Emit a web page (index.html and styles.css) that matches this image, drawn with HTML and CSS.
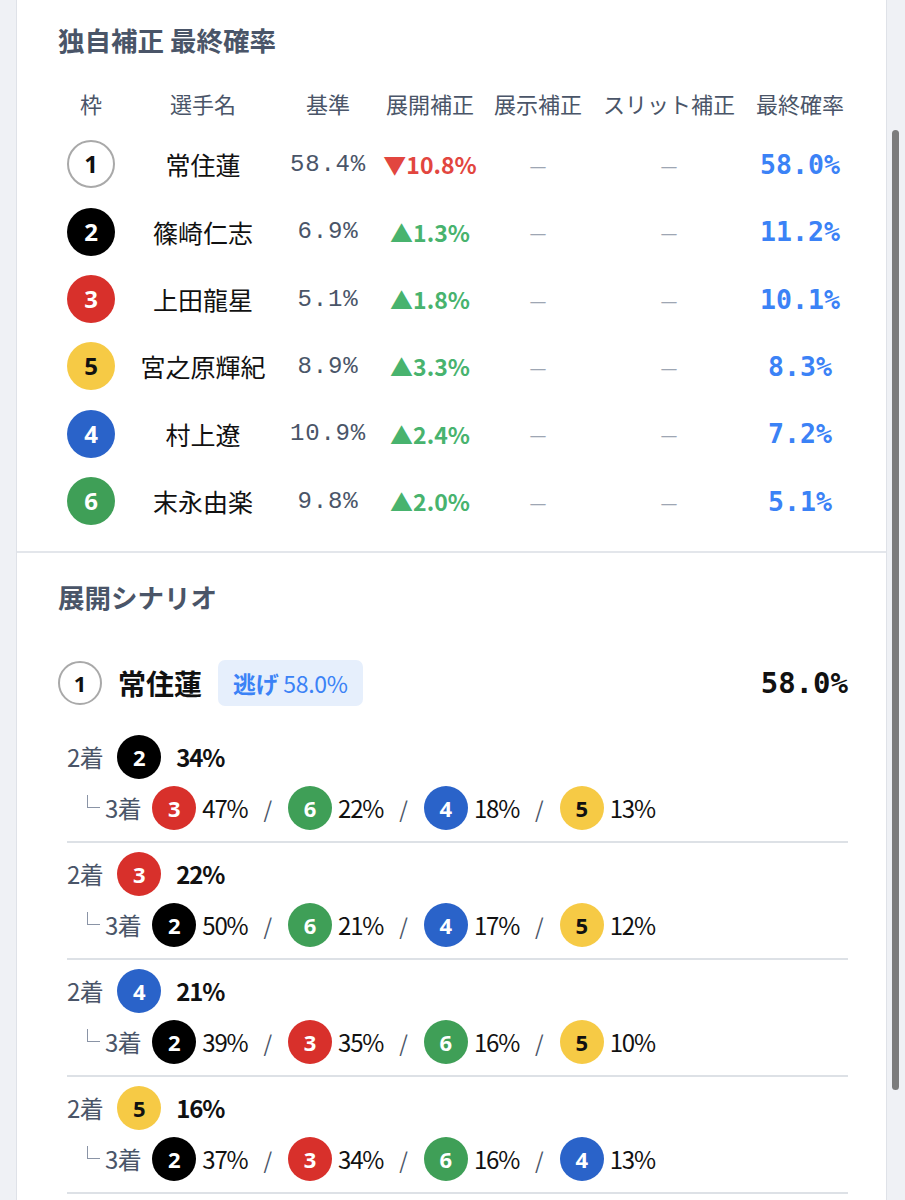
FILE: index.html
```html
<!DOCTYPE html>
<html lang="ja">
<head>
<meta charset="utf-8">
<title>独自補正 最終確率</title>
<link rel="stylesheet" href="styles.css">
</head>
<body>
<div class="card">
  <section class="sec sec-prob">
    <h2 class="sec-title">独自補正 最終確率</h2>
    <div class="ptable">
      <div class="prow phead">
        <div>枠</div><div>選手名</div><div>基準</div><div>展開補正</div><div>展示補正</div><div>スリット補正</div><div>最終確率</div>
      </div>
      <div class="prow">
        <div><span class="waku w1">1</span></div>
        <div class="name">常住蓮</div>
        <div class="base">58.4%</div>
        <div class="adj down"><span class="tri">▼</span>10.8%</div>
        <div class="dash">—</div>
        <div class="dash">—</div>
        <div class="final">58.0%</div>
      </div>
      <div class="prow">
        <div><span class="waku w2">2</span></div>
        <div class="name">篠崎仁志</div>
        <div class="base">6.9%</div>
        <div class="adj up"><span class="tri">▲</span>1.3%</div>
        <div class="dash">—</div>
        <div class="dash">—</div>
        <div class="final">11.2%</div>
      </div>
      <div class="prow">
        <div><span class="waku w3">3</span></div>
        <div class="name">上田龍星</div>
        <div class="base">5.1%</div>
        <div class="adj up"><span class="tri">▲</span>1.8%</div>
        <div class="dash">—</div>
        <div class="dash">—</div>
        <div class="final">10.1%</div>
      </div>
      <div class="prow">
        <div><span class="waku w5">5</span></div>
        <div class="name">宮之原輝紀</div>
        <div class="base">8.9%</div>
        <div class="adj up"><span class="tri">▲</span>3.3%</div>
        <div class="dash">—</div>
        <div class="dash">—</div>
        <div class="final">8.3%</div>
      </div>
      <div class="prow">
        <div><span class="waku w4">4</span></div>
        <div class="name">村上遼</div>
        <div class="base">10.9%</div>
        <div class="adj up"><span class="tri">▲</span>2.4%</div>
        <div class="dash">—</div>
        <div class="dash">—</div>
        <div class="final">7.2%</div>
      </div>
      <div class="prow">
        <div><span class="waku w6">6</span></div>
        <div class="name">末永由楽</div>
        <div class="base">9.8%</div>
        <div class="adj up"><span class="tri">▲</span>2.0%</div>
        <div class="dash">—</div>
        <div class="dash">—</div>
        <div class="final">5.1%</div>
      </div>
    </div>
  </section>

  <section class="sec sec-scn">
    <h2 class="sec-title">展開シナリオ</h2>
    <div class="scn-head">
      <span class="waku w1 lg">1</span>
      <span class="scn-name">常住蓮</span>
      <span class="badge"><b>逃げ</b> 58.0%</span>
      <span class="scn-total">58.0%</span>
    </div>
    <div class="blocks">
      <div class="block">
        <div class="r2"><span class="lbl">2着</span><span class="waku sm w2">2</span><span class="p2">34%</span></div>
        <div class="r3"><span class="elbow"></span><span class="lbl">3着</span>
          <span class="waku sm w3">3</span><span class="p3">47%</span><span class="sl">/</span>
          <span class="waku sm w6">6</span><span class="p3">22%</span><span class="sl">/</span>
          <span class="waku sm w4">4</span><span class="p3">18%</span><span class="sl">/</span>
          <span class="waku sm w5">5</span><span class="p3">13%</span>
        </div>
      </div>
      <div class="block">
        <div class="r2"><span class="lbl">2着</span><span class="waku sm w3">3</span><span class="p2">22%</span></div>
        <div class="r3"><span class="elbow"></span><span class="lbl">3着</span>
          <span class="waku sm w2">2</span><span class="p3">50%</span><span class="sl">/</span>
          <span class="waku sm w6">6</span><span class="p3">21%</span><span class="sl">/</span>
          <span class="waku sm w4">4</span><span class="p3">17%</span><span class="sl">/</span>
          <span class="waku sm w5">5</span><span class="p3">12%</span>
        </div>
      </div>
      <div class="block">
        <div class="r2"><span class="lbl">2着</span><span class="waku sm w4">4</span><span class="p2">21%</span></div>
        <div class="r3"><span class="elbow"></span><span class="lbl">3着</span>
          <span class="waku sm w2">2</span><span class="p3">39%</span><span class="sl">/</span>
          <span class="waku sm w3">3</span><span class="p3">35%</span><span class="sl">/</span>
          <span class="waku sm w6">6</span><span class="p3">16%</span><span class="sl">/</span>
          <span class="waku sm w5">5</span><span class="p3">10%</span>
        </div>
      </div>
      <div class="block">
        <div class="r2"><span class="lbl">2着</span><span class="waku sm w5">5</span><span class="p2">16%</span></div>
        <div class="r3"><span class="elbow"></span><span class="lbl">3着</span>
          <span class="waku sm w2">2</span><span class="p3">37%</span><span class="sl">/</span>
          <span class="waku sm w3">3</span><span class="p3">34%</span><span class="sl">/</span>
          <span class="waku sm w6">6</span><span class="p3">16%</span><span class="sl">/</span>
          <span class="waku sm w4">4</span><span class="p3">13%</span>
        </div>
      </div>
    </div>
  </section>
</div>
<div class="scrollbar"><div class="thumb"></div></div>
</body>
</html>
```

FILE: styles.css
```css
* { box-sizing: border-box; margin: 0; padding: 0; }
html, body { height: 1200px; overflow: hidden; }
body {
  background: #eff1f5;
  font-family: "Noto Sans CJK JP", "Noto Sans", sans-serif;
  color: #111;
  position: relative;
}
.card {
  margin-left: 16px;
  width: 871px;
  height: 1200px;
  background: #fff;
  border-left: 1px solid #dfe2e8;
  border-right: 1px solid #dfe2e8;
}
.sec { padding: 0 38px 0 41px; }
.sec-prob { padding-top: 22px; padding-bottom: 16px; }
.sec-title {
  font-size: 26.5px;
  line-height: 36px;
  font-weight: 700;
  color: #4a5568;
}
.ptable { margin-top: 18px; }
.prow {
  display: grid;
  grid-template-columns: 66px 158px 92px 112px 104px 158px 104px;
  height: 67.4px;
  align-items: center;
  justify-items: center;
}
.phead { height: 54.6px; font-size: 22px; color: #4a5568; }

.waku {
  display: inline-flex;
  align-items: center;
  justify-content: center;
  width: 48px;
  height: 48px;
  border-radius: 50%;
  font-family: "Noto Sans", "Noto Sans CJK JP", sans-serif;
  font-weight: 700;
  font-size: 24px;
  color: #fff;
  line-height: 1;
}
.waku.sm, .waku.lg { width: 44px; height: 44px; font-size: 22px; }
.w1 { background: #fff; color: #111; border: 2px solid #a9a9a9; }
.w2 { background: #000; }
.w3 { background: #d8302b; }
.w4 { background: #2a63c9; }
.w5 { background: #f6ca45; color: #111; }
.w6 { background: #3f9f57; }

.name { font-size: 25px; color: #111; }
.base {
  font-family: "Liberation Mono", "DejaVu Sans Mono", monospace;
  font-size: 24px;
  letter-spacing: 0.8px;
  color: #4a5568;
}
.adj { font-size: 23px; font-weight: 700; display: flex; align-items: center; }
.adj .tri { font-size: 23px; margin-right: 0; }
.down { color: #e2463f; }
.up { color: #48b36e; }
.dash { font-size: 19px; color: #9ea6b3; }
.final {
  font-family: "DejaVu Sans Mono", monospace;
  font-weight: 700;
  font-size: 26.5px;
  color: #3b82f6;
}

.sec-scn { border-top: 2px solid #e3e6eb; padding-top: 26px; }
.scn-head {
  margin-top: 45px;
  height: 46px;
  display: flex;
  align-items: center;
}
.scn-name { margin-left: 16px; font-size: 28px; font-weight: 700; color: #111; }
.badge {
  margin-left: 16px;
  height: 46px;
  padding: 0 15px;
  border-radius: 7px;
  background: #e6effc;
  color: #3b82f6;
  font-size: 23px;
  letter-spacing: -0.3px;
  display: inline-flex;
  align-items: center;
  white-space: pre;
}
.badge b { font-weight: 700; }
.scn-total {
  margin-left: auto;
  font-family: "DejaVu Sans Mono", monospace;
  font-weight: 700;
  font-size: 29px;
  color: #111;
}

.blocks { margin: 20px 0 0 9px; }
.block {
  padding: 9px 0 11px;
  border-bottom: 2px solid #dde1e6;
  display: flex;
  flex-direction: column;
  gap: 7px;
}
.r2, .r3 { display: flex; align-items: center; height: 44px; }
.lbl { font-size: 24px; color: #4a5568; letter-spacing: -0.5px; }
.r2 .waku { margin-left: 14px; }
.p2 { margin-left: 15px; font-size: 24px; font-weight: 700; color: #111; letter-spacing: -1.2px; }
.r3 { padding-left: 20px; }
.elbow {
  width: 13px;
  height: 13px;
  border-left: 1.5px solid #8a94a6;
  border-bottom: 1.5px solid #8a94a6;
  margin-bottom: 12px;
}
.r3 .lbl { margin-left: 5px; }
.r3 .waku { margin-left: 11px; }
.r3 .sl + .waku { margin-left: 0; }
.p3 { margin-left: 6px; font-size: 24px; color: #111; letter-spacing: -1.2px; }
.sl { margin: 0 16px; font-size: 22px; color: #4a5568; }

.scrollbar {
  position: absolute;
  top: 0;
  right: 0;
  width: 18px;
  height: 1200px;
}
.thumb {
  position: absolute;
  left: 5px;
  top: 130px;
  width: 7px;
  height: 960px;
  border-radius: 4px;
  background: #7c7c7c;
}
```
